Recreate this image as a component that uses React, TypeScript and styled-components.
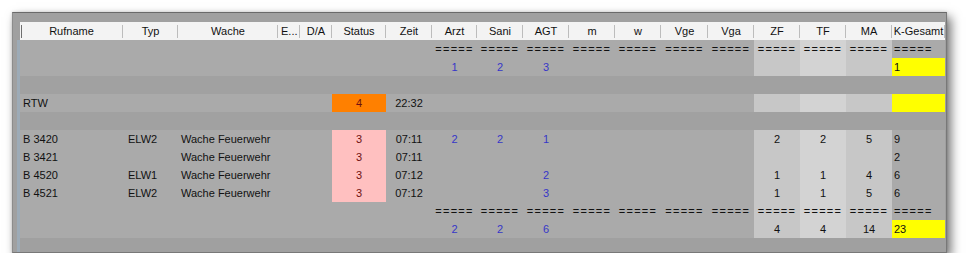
import React from 'react';
import styled, { createGlobalStyle } from 'styled-components';

const GlobalStyle = createGlobalStyle`
  html, body {
    margin: 0;
    padding: 0;
    background: #ffffff;
  }
  body {
    font-family: "Liberation Sans", Arial, sans-serif;
    font-size: 11px;
    color: #111111;
  }
`;

type Align = 'left' | 'center';

interface ColumnDef {
  title: string;
  width: number;
  align: Align;
  pad: number;
  tone?: string;
  headAlign?: Align;
}

const COLUMNS: ColumnDef[] = [
  { title: 'Rufname', width: 103, align: 'left', pad: 3 },
  { title: 'Typ', width: 55, align: 'left', pad: 5 },
  { title: 'Wache', width: 100, align: 'left', pad: 3 },
  { title: 'E...', width: 22, align: 'center', pad: 0, headAlign: 'left' },
  { title: 'D/A', width: 32, align: 'center', pad: 0 },
  { title: 'Status', width: 54, align: 'center', pad: 0 },
  { title: 'Zeit', width: 46, align: 'center', pad: 0 },
  { title: 'Arzt', width: 45, align: 'center', pad: 0 },
  { title: 'Sani', width: 46, align: 'center', pad: 0 },
  { title: 'AGT', width: 46, align: 'center', pad: 0 },
  { title: 'm', width: 46, align: 'center', pad: 0 },
  { title: 'w', width: 46, align: 'center', pad: 0 },
  { title: 'Vge', width: 47, align: 'center', pad: 0 },
  { title: 'Vga', width: 46, align: 'center', pad: 0 },
  { title: 'ZF', width: 46, align: 'center', pad: 0, tone: '#c7c7c7' },
  { title: 'TF', width: 46, align: 'center', pad: 0, tone: '#d3d3d3' },
  { title: 'MA', width: 46, align: 'center', pad: 0, tone: '#c7c7c7' },
  { title: 'K-Gesamt', width: 53, align: 'left', pad: 2 },
];

const TEMPLATE = COLUMNS.map((c) => `${c.width}px`).join(' ');

const BLUE = '#3636c8';
const PINK = '#ffc0c0';
const ORANGE = '#ff8000';
const YELLOW = '#ffff00';
const STATUS_INK = '#6e1010';

interface CellSpec {
  text?: string;
  ink?: string;
  fill?: string;
}

type CellValue = string | CellSpec;

interface RowSpec {
  kind: 'data' | 'rule' | 'band';
  cells?: Record<number, CellValue>;
}

const blue = (text: string): CellSpec => ({ text, ink: BLUE });
const status = (text: string, fill: string): CellSpec => ({ text, fill, ink: STATUS_INK });

const ROWS: RowSpec[] = [
  { kind: 'rule' },
  { kind: 'data', cells: { 7: blue('1'), 8: blue('2'), 9: blue('3'), 17: { text: '1', fill: YELLOW } } },
  { kind: 'band' },
  { kind: 'data', cells: { 0: 'RTW', 5: status('4', ORANGE), 6: '22:32', 17: { fill: YELLOW } } },
  { kind: 'band' },
  {
    kind: 'data',
    cells: {
      0: 'B 3420', 1: 'ELW2', 2: 'Wache Feuerwehr', 5: status('3', PINK), 6: '07:11',
      7: blue('2'), 8: blue('2'), 9: blue('1'), 14: '2', 15: '2', 16: '5', 17: '9',
    },
  },
  {
    kind: 'data',
    cells: { 0: 'B 3421', 2: 'Wache Feuerwehr', 5: status('3', PINK), 6: '07:11', 17: '2' },
  },
  {
    kind: 'data',
    cells: {
      0: 'B 4520', 1: 'ELW1', 2: 'Wache Feuerwehr', 5: status('3', PINK), 6: '07:12',
      9: blue('2'), 14: '1', 15: '1', 16: '4', 17: '6',
    },
  },
  {
    kind: 'data',
    cells: {
      0: 'B 4521', 1: 'ELW2', 2: 'Wache Feuerwehr', 5: status('3', PINK), 6: '07:12',
      9: blue('3'), 14: '1', 15: '1', 16: '5', 17: '6',
    },
  },
  { kind: 'rule' },
  {
    kind: 'data',
    cells: {
      7: blue('2'), 8: blue('2'), 9: blue('6'), 14: '4', 15: '4', 16: '14',
      17: { text: '23', fill: YELLOW },
    },
  },
];

/* window frame with its drop shadow */
const Window = styled.div`
  margin: 12px 0 0 12px;
  width: 935px;
  height: 241px;
  box-sizing: border-box;
  display: flex;
  flex-direction: column;
  padding: 9px 1px 0 7px;
  background: #a0a0a0;
  border-top: 1px solid #6a6a6a;
  border-left: 1px solid #8c8c8c;
  border-right: 1px solid #787878;
  border-bottom: 1px solid #787878;
  box-shadow: 4px 5px 10px rgba(0, 0, 0, 0.55), 0 0 3px rgba(0, 0, 0, 0.15);
`;

const HeaderBar = styled.div`
  display: grid;
  grid-template-columns: ${TEMPLATE};
  height: 18px;
  background: #f3f3f3;
`;

const HeaderCell = styled.div<{ $first?: boolean; $align?: Align }>`
  height: 18px;
  line-height: 18px;
  text-align: ${(p) => p.$align ?? 'center'};
  padding-left: ${(p) => (p.$align === 'left' ? '3px' : '0')};
  white-space: nowrap;
  overflow: hidden;
  color: #111;
  background:
    linear-gradient(#bcbcbc, #bcbcbc) no-repeat right center / 1px 13px
    ${(p) => (p.$first ? ', linear-gradient(#6e6e6e, #6e6e6e) no-repeat 1px center / 1px 13px' : '')};
`;

/* body area with the pale row-marker strip on its left */
const Body = styled.div`
  flex: 1;
  margin-left: -3px;
  border-left: 3px solid #9dabb7;
  display: flex;
  flex-direction: column;
`;

const Row = styled.div<{ $band?: boolean }>`
  display: grid;
  grid-template-columns: ${TEMPLATE};
  height: 18px;
  line-height: 18px;
  background: ${(p) => (p.$band ? '#a1a1a1' : '#aaaaaa')};
`;

const Cell = styled.div<{ $align: Align; $pad: number; $fill?: string; $ink?: string }>`
  height: 18px;
  white-space: nowrap;
  overflow: hidden;
  text-align: ${(p) => p.$align};
  padding-left: ${(p) => p.$pad}px;
  background: ${(p) => p.$fill ?? 'transparent'};
  color: ${(p) => p.$ink ?? '#111111'};
`;

const Rule = styled.span`
  letter-spacing: 1.3px;
`;

const Filler = styled.div`
  flex: 1;
  background: #a0a0a0;
`;

function renderRow(row: RowSpec, index: number) {
  if (row.kind === 'band') {
    return <Row key={index} $band>{COLUMNS.map((c) => <Cell key={c.title} $align={c.align} $pad={c.pad} />)}</Row>;
  }
  return (
    <Row key={index}>
      {COLUMNS.map((col, ci) => {
        const raw = row.cells?.[ci];
        const spec: CellSpec = typeof raw === 'string' ? { text: raw } : raw ?? {};
        const fill = spec.fill ?? col.tone;
        const content =
          row.kind === 'rule' && ci >= 7 ? <Rule>=====</Rule> : spec.text ?? '';
        return (
          <Cell key={col.title} $align={col.align} $pad={col.pad} $fill={fill} $ink={spec.ink}>
            {content}
          </Cell>
        );
      })}
    </Row>
  );
}

export default function App() {
  return (
    <>
      <GlobalStyle />
      <Window>
        <HeaderBar>
          {COLUMNS.map((col, i) => (
            <HeaderCell key={col.title} $first={i === 0} $align={col.headAlign}>
              {col.title}
            </HeaderCell>
          ))}
        </HeaderBar>
        <Body>
          {ROWS.map(renderRow)}
          <Filler />
        </Body>
      </Window>
    </>
  );
}
